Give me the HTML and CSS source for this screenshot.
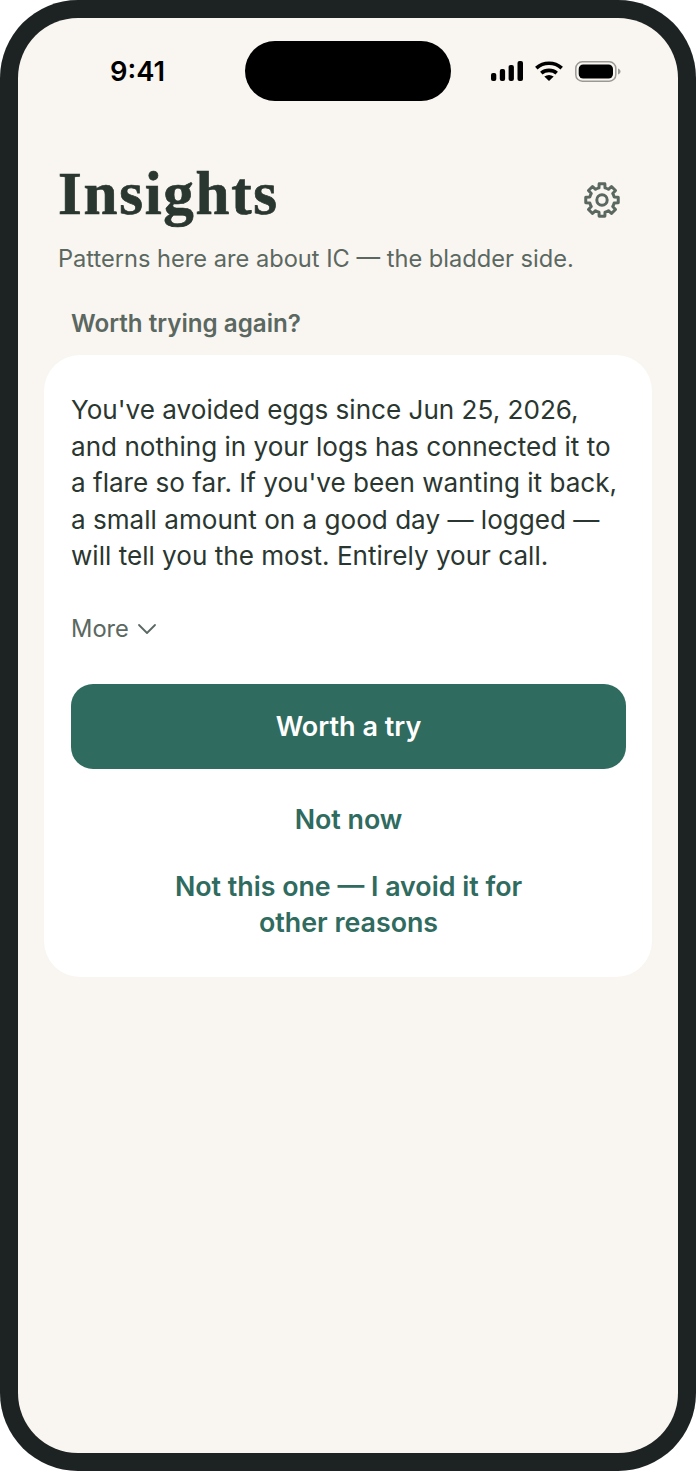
FILE: index.html
```html
<!DOCTYPE html>
<html lang="en">
<head>
  <meta charset="UTF-8">
  <meta name="viewport" content="width=device-width, initial-scale=1.0">
  <title>Insights</title>
  <link rel="stylesheet" href="styles.css">
</head>
<body>
  <div class="phone">
    <div class="screen">
      <div class="status-bar">
        <span class="clock">9:41</span>
        <div class="island"></div>
        <div class="status-icons">
          <svg class="signal" width="32" height="20" viewBox="0 0 32 20" fill="#000">
            <rect x="0" y="12" width="5.300" height="8" rx="2"/>
            <rect x="8.800" y="8" width="5.300" height="12" rx="2"/>
            <rect x="17.600" y="4" width="5.300" height="16" rx="2"/>
            <rect x="26.500" y="0" width="5.500" height="20" rx="2"/>
          </svg>
          <svg class="wifi" width="28" height="20" viewBox="0 0 28 20" fill="none" stroke="#000" stroke-width="3.600">
            <path d="M1.300 7.200C8.500 .6 19.500 .6 26.700 7.200"/>
            <path d="M6.300 12.200C10.500 8.400 17.500 8.400 21.700 12.200"/>
            <path d="M14 20L9.300 15.400Q14 12.400 18.700 15.400Z" fill="#000" stroke="none"/>
          </svg>
          <svg class="battery" width="46" height="21" viewBox="0 0 46 21">
            <rect x=".8" y=".8" width="40" height="19.400" rx="6.500" fill="none" stroke="#9a9996" stroke-width="1.500"/>
            <rect x="3.700" y="3.500" width="34.300" height="14" rx="4.500" fill="#000"/>
            <path d="M43 7.500v6c1.500-.5 2.500-1.600 2.500-3s-1-2.500-2.500-3z" fill="#9a9996"/>
          </svg>
        </div>
      </div>

      <header class="page-head">
        <div>
          <h1>Insights</h1>
          <p class="subtitle">Patterns here are about IC — the bladder side.</p>
        </div>
        <svg class="gear" width="40" height="40" viewBox="0 0 40 40" fill="none" stroke="#5b6861" stroke-width="3" stroke-linejoin="round">
          <circle cx="20" cy="20" r="5.200"/>
          <path d="M16.980 7.870L17.140 3.750H22.860L23.020 7.870A12.500 12.500 0 0 1 26.440 9.290L29.460 6.480L33.520 10.540L30.710 13.560A12.500 12.500 0 0 1 32.130 16.980L36.250 17.140V22.860L32.130 23.020A12.500 12.500 0 0 1 30.710 26.440L33.520 29.460L29.460 33.520L26.440 30.710A12.500 12.500 0 0 1 23.020 32.130L22.860 36.250H17.140L16.980 32.130A12.500 12.500 0 0 1 13.560 30.710L10.540 33.520L6.480 29.460L9.290 26.440A12.500 12.500 0 0 1 7.870 23.020L3.750 22.860V17.140L7.870 16.980A12.500 12.500 0 0 1 9.290 13.560L6.480 10.540L10.540 6.480L13.560 9.290A12.500 12.500 0 0 1 16.980 7.870Z"/>
        </svg>
      </header>

      <h2 class="section-label">Worth trying again?</h2>

      <section class="card">
        <p class="card-text">You've avoided eggs since Jun 25, 2026, and nothing in your logs has connected it to a flare so far. If you've been wanting it back, a small amount on a good day — logged — will tell you the most. Entirely your call.</p>
        <div class="more">
          <span>More</span>
          <svg width="20" height="12" viewBox="0 0 20 12" fill="none" stroke="#5b6861" stroke-width="1.800" stroke-linecap="round" stroke-linejoin="round"><path d="M2 2l8 8 8-8"/></svg>
        </div>
        <button class="btn-primary">Worth a try</button>
        <button class="btn-link btn-now">Not now</button>
        <button class="btn-link btn-avoid">Not this one — I avoid it for other reasons</button>
      </section>
    </div>
  </div>
</body>
</html>
```

FILE: styles.css
```css
* {
  box-sizing: border-box;
}

body {
  margin: 0;
  background-color: #fff;
  font-family: Inter, "Liberation Sans", sans-serif;
}

.phone {
  width: 696px;
  height: 1471px;
  padding: 18px;
  background-color: #1c2322;
  border-radius: 78px;
}

.screen {
  height: 100%;
  padding: 23px 26px 0;
  background-color: #f9f6f1;
  border-radius: 60px;
}

/* status bar */
.status-bar {
  display: flex;
  align-items: center;
  height: 60px;
  margin: 0 -26px;
  padding-left: 92px;
}

.clock {
  width: 135px;
  padding-top: 1px;
  font-size: 27.300px;
  font-weight: 600;
  color: #000;
}

.island {
  width: 206px;
  height: 60px;
  background-color: #000;
  border-radius: 30px;
}

.status-icons {
  display: flex;
  align-items: center;
  gap: 12px;
  margin-left: 40px;
}

/* heading */
.page-head {
  display: flex;
  justify-content: space-between;
  margin-top: 58px;
  padding: 0 30px 0 14px;
}

h1 {
  margin: 0;
  font-family: "Liberation Serif", serif;
  font-size: 61px;
  line-height: 70px;
  font-weight: 700;
  letter-spacing: 1.750px;
  -webkit-text-stroke: 0.7px #2a3630;
  color: #2a3630;
}

.subtitle {
  margin: 14px 0 0;
  font-size: 23.630px;
  line-height: 32px;
  color: #5b6861;
}

.gear {
  margin-top: 21px;
}

.section-label {
  margin: 33px 0 0 27px;
  font-size: 24.200px;
  line-height: 32px;
  font-weight: 600;
  color: #5b6861;
}

/* card */
.card {
  margin-top: 15px;
  padding: 37px 26px 37px 27px;
  background-color: #fff;
  border-radius: 36px;
}

.card-text {
  margin: 0;
  font-size: 26.100px;
  line-height: 36.600px;
  color: #2a3630;
}

.more {
  display: flex;
  align-items: center;
  gap: 8px;
  margin-top: 38px;
  font-size: 23.700px;
  line-height: 32px;
  color: #5b6861;
}

.btn-primary {
  display: block;
  width: 100%;
  height: 85px;
  margin-top: 39px;
  padding-top: 2px;
  border: none;
  border-radius: 22px;
  background-color: #2f6b5e;
  font: 600 27px Inter, sans-serif;
  color: #fff;
}

.btn-link {
  display: block;
  width: 100%;
  padding: 0 80px;
  border: none;
  background: none;
  font: 600 26.800px/36px Inter, sans-serif;
  color: #2f6b5e;
}

.btn-now {
  margin-top: 32px;
}

.btn-avoid {
  margin-top: 31px;
}
```
